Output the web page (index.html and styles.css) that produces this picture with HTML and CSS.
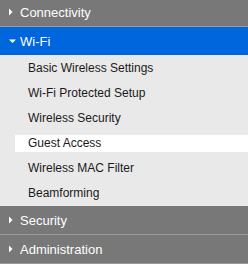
FILE: index.html
```html
<!DOCTYPE html>
<html lang="en">
<head>
    <meta charset="UTF-8">
    <meta name="viewport" content="width=device-width, initial-scale=1.0">
    <title>Router Menu</title>
    <link rel="stylesheet" href="styles.css">
</head>
<body>
    <nav class="menu">
        <div class="menu-header">
            <svg class="arrow" width="8" height="8" viewBox="0 0 8 8"><polygon points="1,0.5 4.5,4 1,7.5" fill="#fff"/></svg>
            <span>Connectivity</span>
        </div>
        <div class="menu-header active">
            <svg class="arrow" width="8" height="8" viewBox="0 0 8 8"><polygon points="1,2.5 8,2.5 4.5,6" fill="#fff"/></svg>
            <span>Wi-Fi</span>
        </div>
        <ul class="sub-menu">
            <li>Basic Wireless Settings</li>
            <li>Wi-Fi Protected Setup</li>
            <li>Wireless Security</li>
            <li class="selected">Guest Access</li>
            <li>Wireless MAC Filter</li>
            <li>Beamforming</li>
        </ul>
        <div class="menu-header">
            <svg class="arrow" width="8" height="8" viewBox="0 0 8 8"><polygon points="1,0.5 4.5,4 1,7.5" fill="#fff"/></svg>
            <span>Security</span>
        </div>
        <div class="menu-header">
            <svg class="arrow" width="8" height="8" viewBox="0 0 8 8"><polygon points="1,0.5 4.5,4 1,7.5" fill="#fff"/></svg>
            <span>Administration</span>
        </div>
    </nav>
</body>
</html>
```

FILE: styles.css
```css
body {
    margin: 0;
    background-color: #e9e9e9;
    font-family: "Liberation Sans", Arial, sans-serif;
    overflow: hidden;
}
.menu {
    display: flex;
    flex-direction: column;
    /* list is scrolled down a little */
    margin-top: -2px;
}
.menu-header {
    display: flex;
    align-items: center;
    gap: 4px;
    height: 28px;
    padding-left: 8px;
    background-color: #787878;
    border-bottom: 1px solid #999;
    color: #fff;
    font-size: 13px;
}
.menu-header.active {
    background-color: #0066dd;
    border-bottom: none;
}
.arrow {
    display: block;
    flex-shrink: 0;
}
.sub-menu {
    list-style: none;
    margin: 0;
    padding: 5px 0 4px 15px;
    display: flex;
    flex-direction: column;
    gap: 8px;
}
.sub-menu li {
    height: 17px;
    line-height: 17px;
    padding-left: 13px;
    font-size: 12px;
    color: #1a1a1a;
}
.sub-menu li.selected {
    background-color: #fff;
}
```
